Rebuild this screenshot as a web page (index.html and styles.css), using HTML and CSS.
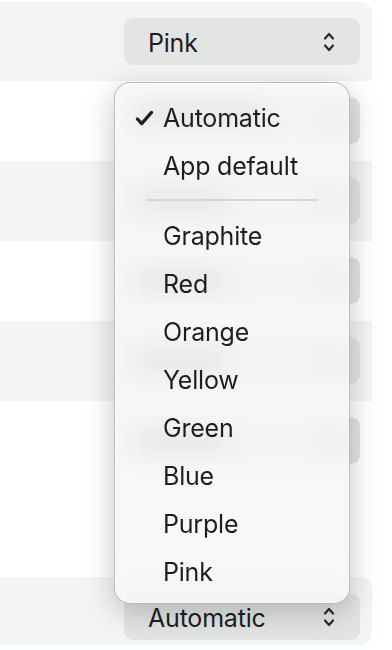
FILE: index.html
```html
<!DOCTYPE html>
<html lang="en">

<head>
   <meta charset="UTF-8">
   <meta name="viewport" content="width=device-width, initial-scale=1.0">
   <title>Accent colour menu</title>
   <link rel="stylesheet" href="styles.css">
</head>

<body>
   <div class="rows">
      <div class="row shaded first">
         <div class="popup"><span class="label">Pink</span><svg class="chev" viewBox="0 0 10 22"><path d="M1 7.5 L5 3 L9 7.5 M1 14.5 L5 19 L9 14.5"/></svg></div>
      </div>
      <div class="row">
         <div class="popup"><span class="ghost wide"></span><svg class="chev" viewBox="0 0 10 22"><path d="M1 7.5 L5 3 L9 7.5 M1 14.5 L5 19 L9 14.5"/></svg></div>
      </div>
      <div class="row shaded">
         <div class="popup"><span class="ghost"></span><svg class="chev" viewBox="0 0 10 22"><path d="M1 7.5 L5 3 L9 7.5 M1 14.5 L5 19 L9 14.5"/></svg></div>
      </div>
      <div class="row">
         <div class="popup"><span class="ghost"></span><svg class="chev" viewBox="0 0 10 22"><path d="M1 7.5 L5 3 L9 7.5 M1 14.5 L5 19 L9 14.5"/></svg></div>
      </div>
      <div class="row shaded">
         <div class="popup"><span class="ghost"></span><svg class="chev" viewBox="0 0 10 22"><path d="M1 7.5 L5 3 L9 7.5 M1 14.5 L5 19 L9 14.5"/></svg></div>
      </div>
      <div class="row tall">
         <div class="popup"><span class="ghost"></span><svg class="chev" viewBox="0 0 10 22"><path d="M1 7.5 L5 3 L9 7.5 M1 14.5 L5 19 L9 14.5"/></svg></div>
      </div>
      <div class="row shaded last">
         <div class="popup"><span class="label">Automatic</span><svg class="chev" viewBox="0 0 10 22"><path d="M1 7.5 L5 3 L9 7.5 M1 14.5 L5 19 L9 14.5"/></svg></div>
      </div>
   </div>

   <div class="menu">
      <div class="item"><svg class="check" viewBox="0 0 20 16"><path d="M2.5 8.5 L7 13.5 L17.5 1.5"/></svg>Automatic</div>
      <div class="item">App default</div>
      <div class="sep"></div>
      <div class="item">Graphite</div>
      <div class="item">Red</div>
      <div class="item">Orange</div>
      <div class="item">Yellow</div>
      <div class="item">Green</div>
      <div class="item">Blue</div>
      <div class="item">Purple</div>
      <div class="item">Pink</div>
   </div>
</body>

</html>
```

FILE: styles.css
```css
body {
   margin: 0;
   background: #ffffff;
   font-family: Inter, "Liberation Sans", sans-serif;
   color: #1e1e1e;
   overflow: hidden;
}

.rows {
   display: flex;
   flex-direction: column;
   width: 372px;
   padding-top: 2px;
}

.row {
   display: flex;
   justify-content: flex-end;
   align-items: flex-start;
   height: 80px;
   padding: 16px 12px 0 0;
   box-sizing: border-box;
}

.row.first {
   height: 79px;
   border-radius: 0 12px 0 0;
}

.row.tall {
   height: 176px;
}

.row.last {
   height: 68px;
   border-radius: 0 12px 12px 0;
}

.shaded {
   background: #f3f4f4;
}

.popup {
   display: flex;
   align-items: center;
   justify-content: space-between;
   width: 236px;
   height: 47px;
   padding: 0 26px 0 24px;
   box-sizing: border-box;
   background: #e3e4e4;
   border-radius: 9px;
   font-size: 25px;
   letter-spacing: -0.2px;
}

.label {
   padding-top: 2px;
}

/* blurred shape of the hidden button labels under the menu */
.ghost {
   width: 90px;
   height: 16px;
   margin-left: -12px;
   border-radius: 6px;
   background: rgba(0, 0, 0, 0.4);
}

.ghost.wide {
   width: 130px;
   margin-top: -18px;
}

.chev {
   width: 10px;
   height: 22px;
   margin-top: 1px;
   fill: none;
   stroke: #2a2a2a;
   stroke-width: 2.2;
   stroke-linecap: round;
   stroke-linejoin: round;
}

.menu {
   position: absolute;
   left: 114px;
   top: 82px;
   width: 236px;
   height: 522px;
   box-sizing: border-box;
   padding-top: 11px;
   background: rgba(247, 247, 247, 0.82);
   backdrop-filter: blur(12px);
   border: 1px solid rgba(0, 0, 0, 0.24);
   border-radius: 16px;
   box-shadow: 0 8px 30px rgba(0, 0, 0, 0.22), 0 0 0 0.5px rgba(255, 255, 255, 0.6) inset;
}

.item {
   position: relative;
   height: 48px;
   line-height: 48px;
   padding-left: 48px;
   font-size: 25px;
   letter-spacing: -0.2px;
}

.check {
   position: absolute;
   left: 20px;
   top: 17px;
   width: 19px;
   height: 15px;
   fill: none;
   stroke: #1e1e1e;
   stroke-width: 3.4;
   stroke-linecap: round;
   stroke-linejoin: round;
}

.sep {
   height: 22px;
   margin: 0 31px;
   position: relative;
}

.sep::after {
   content: "";
   position: absolute;
   left: 0;
   right: 0;
   top: 9px;
   height: 2px;
   background: #d6d6d6;
}
```
